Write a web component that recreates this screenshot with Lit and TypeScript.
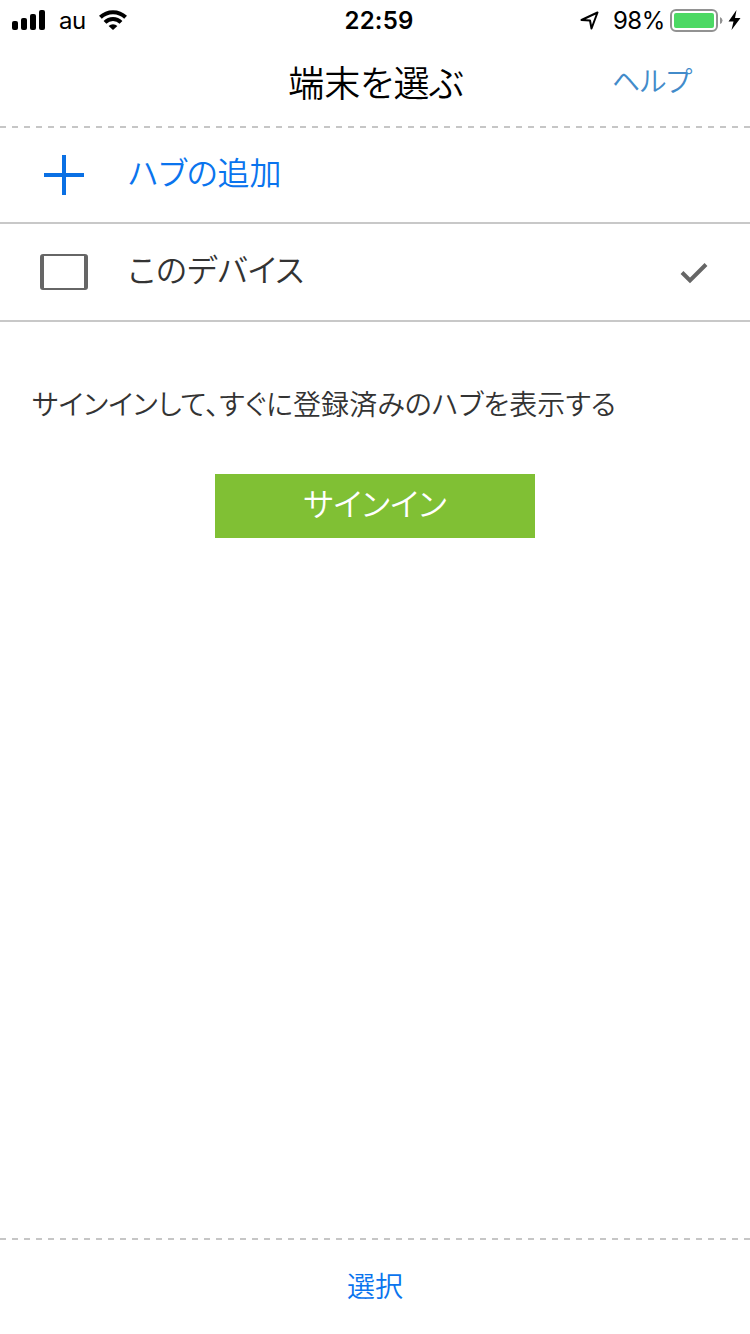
import { LitElement, html, css } from "lit";
import { customElement } from "lit/decorators.js";

@customElement("status-bar")
class StatusBar extends LitElement {
  static styles = css`
    :host {
      display: grid;
      grid-template-columns: 1fr auto 1fr;
      align-items: center;
      height: 40px;
      padding: 0 9px 0 12px;
      color: #000;
      font: 400 24px/40px Inter, "Liberation Sans", sans-serif;
    }
    svg { display: block; flex: none; }
    .left, .right { display: flex; align-items: center; }
    .right { justify-content: flex-end; }
    .carrier, .time, .percent { padding-top: 2px; line-height: 38px; }
    .carrier { margin: 0 13px 0 13px; letter-spacing: -0.5px; }
    .time { padding-left: 5px; font-weight: 600; letter-spacing: 0.2px; }
    .percent { margin: 0 5px 0 14px; letter-spacing: -0.4px; }
    .battery { margin-top: 1px; }
    .bolt { margin-left: 5px; }
  `;
  render() {
    return html`
      <div class="left">
        <svg width="34" height="20" viewBox="0 0 34 20">
          <rect x="0" y="11" width="6" height="9" rx="2" />
          <rect x="9" y="8" width="6" height="12" rx="2" />
          <rect x="18" y="4" width="6" height="16" rx="2" />
          <rect x="27" y="0" width="6" height="20" rx="2" />
        </svg>
        <span class="carrier">au</span>
        <svg width="28" height="20" viewBox="0 0 28 20" fill="none" stroke="#000" stroke-width="4">
          <path d="M1.4 7.2 A18.2 18.2 0 0 1 26.6 7.2" />
          <path d="M6 12.4 A11.4 11.4 0 0 1 22 12.4" />
          <path d="M14 20 L9.6 15.9 A6.6 6.6 0 0 1 18.4 15.9 Z" fill="#000" stroke="none" />
        </svg>
      </div>
      <span class="time">22:59</span>
      <div class="right">
        <svg width="20" height="20" viewBox="0 0 20 20" fill="none" stroke="#000" stroke-width="2" stroke-linejoin="round">
          <path d="M2.5 10 L18.5 2.5 L12.5 18.5 L11 10.5 Z" />
        </svg>
        <span class="percent">98%</span>
        <svg class="battery" width="53" height="24" viewBox="0 0 53 24">
          <rect x="1" y="1" width="46" height="21" rx="5" fill="#fff" stroke="#929292" stroke-width="2" />
          <rect x="4" y="4" width="40" height="15" rx="2" fill="#4cd964" />
          <path d="M50 8 Q52.5 9 52.5 11.5 Q52.5 14 50 15 Z" fill="#929292" />
        </svg>
        <svg class="bolt" width="13" height="20" viewBox="0 0 13 20">
          <path d="M8.5 0 L0.5 11.5 H5.5 L3.5 20 L12.5 8 H7 Z" />
        </svg>
      </div>
    `;
  }
}

@customElement("app-root")
class AppRoot extends LitElement {
  static styles = css`
    :host {
      display: flex;
      flex-direction: column;
      height: 1334px;
      background: #fff;
      color: #333;
      font-family: "Noto Sans CJK JP", sans-serif;
      font-weight: 350;
      font-feature-settings: "palt";
    }
    svg { display: block; flex: none; }
    .header {
      display: grid;
      grid-template-columns: 1fr auto 1fr;
      height: 86px;
      line-height: 82px;
    }
    .title { grid-column: 2; padding-left: 2px; font-size: 36px; color: #000; }
    .help { justify-self: end; margin-right: 58px; font-size: 28px; line-height: 80px; color: #428bca; }
    .dashes {
      flex: none;
      height: 2px;
      background: repeating-linear-gradient(90deg, #c6c6c6 0 6px, transparent 6px 12px);
    }
    .row {
      display: flex;
      align-items: center;
      box-sizing: border-box;
      height: 96px;
      padding: 0 40px;
      border-bottom: 2px solid #c8c8c8;
      font-size: 32px;
      line-height: 88px;
    }
    .row.device { height: 98px; line-height: 88px; letter-spacing: 0.3px; }
    .label { flex: 1; margin-left: 40px; height: 96px; }
    .add { color: #0a74ee; }
    .signin {
      display: flex;
      flex-direction: column;
      flex: 1;
      padding: 60px 32px 0;
    }
    .note { font-size: 28px; line-height: 42px; letter-spacing: 0.08px; white-space: nowrap; }
    .button {
      align-self: center;
      width: 320px;
      height: 64px;
      margin-top: 50px;
      background: #80c034;
      color: #fff;
      font-size: 32px;
      line-height: 56px;
      text-align: center;
    }
    .footer { height: 94px; line-height: 90px; font-size: 28px; text-align: center; color: #0a74ee; }
  `;
  render() {
    return html`
      <status-bar></status-bar>
      <div class="header">
        <span class="title">端末を選ぶ</span>
        <span class="help">ヘルプ</span>
      </div>
      <div class="dashes"></div>
      <div class="row add">
        <svg width="48" height="48" viewBox="0 0 48 48" fill="none" stroke="#0a70e4" stroke-width="4">
          <path d="M24 4 V44 M4 24 H44" />
        </svg>
        <span class="label">ハブの追加</span>
      </div>
      <div class="row device">
        <svg width="48" height="36" viewBox="0 0 48 36">
          <path fill="#666" fill-rule="evenodd" d="M3 0 H45 Q48 0 48 3 V33 Q48 36 45 36 H3 Q0 36 0 33 V3 Q0 0 3 0 Z M4 2 V34 H44 V2 Z" />
        </svg>
        <span class="label">このデバイス</span>
        <svg width="32" height="32" viewBox="0 0 32 32" fill="none" stroke="#666" stroke-width="4">
          <path d="M4 16.5 L12 24.5 L28 8.5" />
        </svg>
      </div>
      <div class="signin">
        <div class="note">サインインして、すぐに登録済みのハブを表示する</div>
        <div class="button">サインイン</div>
      </div>
      <div class="dashes"></div>
      <div class="footer">選択</div>
    `;
  }
}
